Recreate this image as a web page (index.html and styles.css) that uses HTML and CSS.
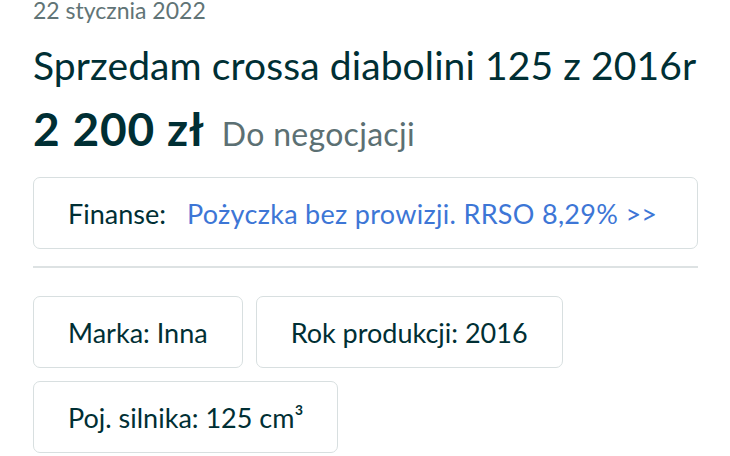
FILE: index.html
```html
<!DOCTYPE html>
<html lang="pl">
<head>
  <meta charset="UTF-8">
  <meta name="viewport" content="width=device-width, initial-scale=1.0">
  <title>Sprzedam crossa diabolini 125 z 2016r</title>
  <link rel="stylesheet" href="styles.css">
</head>
<body>
  <div class="ogloszenie">
    <div class="data">22 stycznia 2022</div>
    <h1 class="tytul">Sprzedam crossa diabolini 125 z 2016r</h1>
    <div class="cena">
      <span class="kwota">2 200 zł</span>
      <span class="negocjacja">Do negocjacji</span>
    </div>

    <div class="finanse">
      <span class="finanse-label">Finanse:</span>
      <a href="#" class="finanse-link">Pożyczka bez prowizji. RRSO 8,29% &gt;&gt;</a>
    </div>

    <hr class="separator">

    <ul class="parametry">
      <li class="parametr">Marka: Inna</li>
      <li class="parametr">Rok produkcji: 2016</li>
      <li class="parametr">Poj. silnika: 125 cm³</li>
    </ul>
  </div>
</body>
</html>
```

FILE: styles.css
```css
body {
  font-family: Lato, "Noto Sans", sans-serif;
  margin: 0;
  padding: 0 32px 0 33px;
  background: #fff;
  color: #002f34;
  overflow: hidden;
}

.ogloszenie {
  display: flex;
  flex-direction: column;
}

.data {
  font-size: 23px;
  line-height: 26px;
  margin-top: -3px;
  color: #617476;
}

.tytul {
  font-size: 39px;
  font-weight: normal;
  letter-spacing: 0.1px;
  line-height: 48px;
  margin: 18px 0 0;
}

.cena {
  display: flex;
  align-items: baseline;
  gap: 17px;
  margin-top: 14px;
}

.kwota {
  font-size: 46px;
  font-weight: bold;
  letter-spacing: 0.8px;
  line-height: 52px;
}

.negocjacja {
  font-size: 32px;
  letter-spacing: 0.3px;
  color: #5c7073;
}

.finanse {
  margin-top: 22px;
  border: 1px solid #d8dfe0;
  border-radius: 7px;
  height: 70px;
  padding: 0 34px;
  display: flex;
  align-items: center;
  gap: 21px;
  font-size: 27px;
}

.finanse-link {
  color: #3d76d6;
  text-decoration: none;
  letter-spacing: 0.3px;
}

.separator {
  border: none;
  border-top: 2px solid #dde2e3;
  margin: 17px 0 28px;
}

.parametry {
  list-style: none;
  margin: 0;
  padding: 0;
  display: flex;
  flex-wrap: wrap;
  gap: 13px;
  width: 560px;
}

.parametr {
  border: 1px solid #d8dfe0;
  border-radius: 7px;
  height: 70px;
  padding: 0 34px;
  display: flex;
  align-items: center;
  font-size: 27px;
}
```
